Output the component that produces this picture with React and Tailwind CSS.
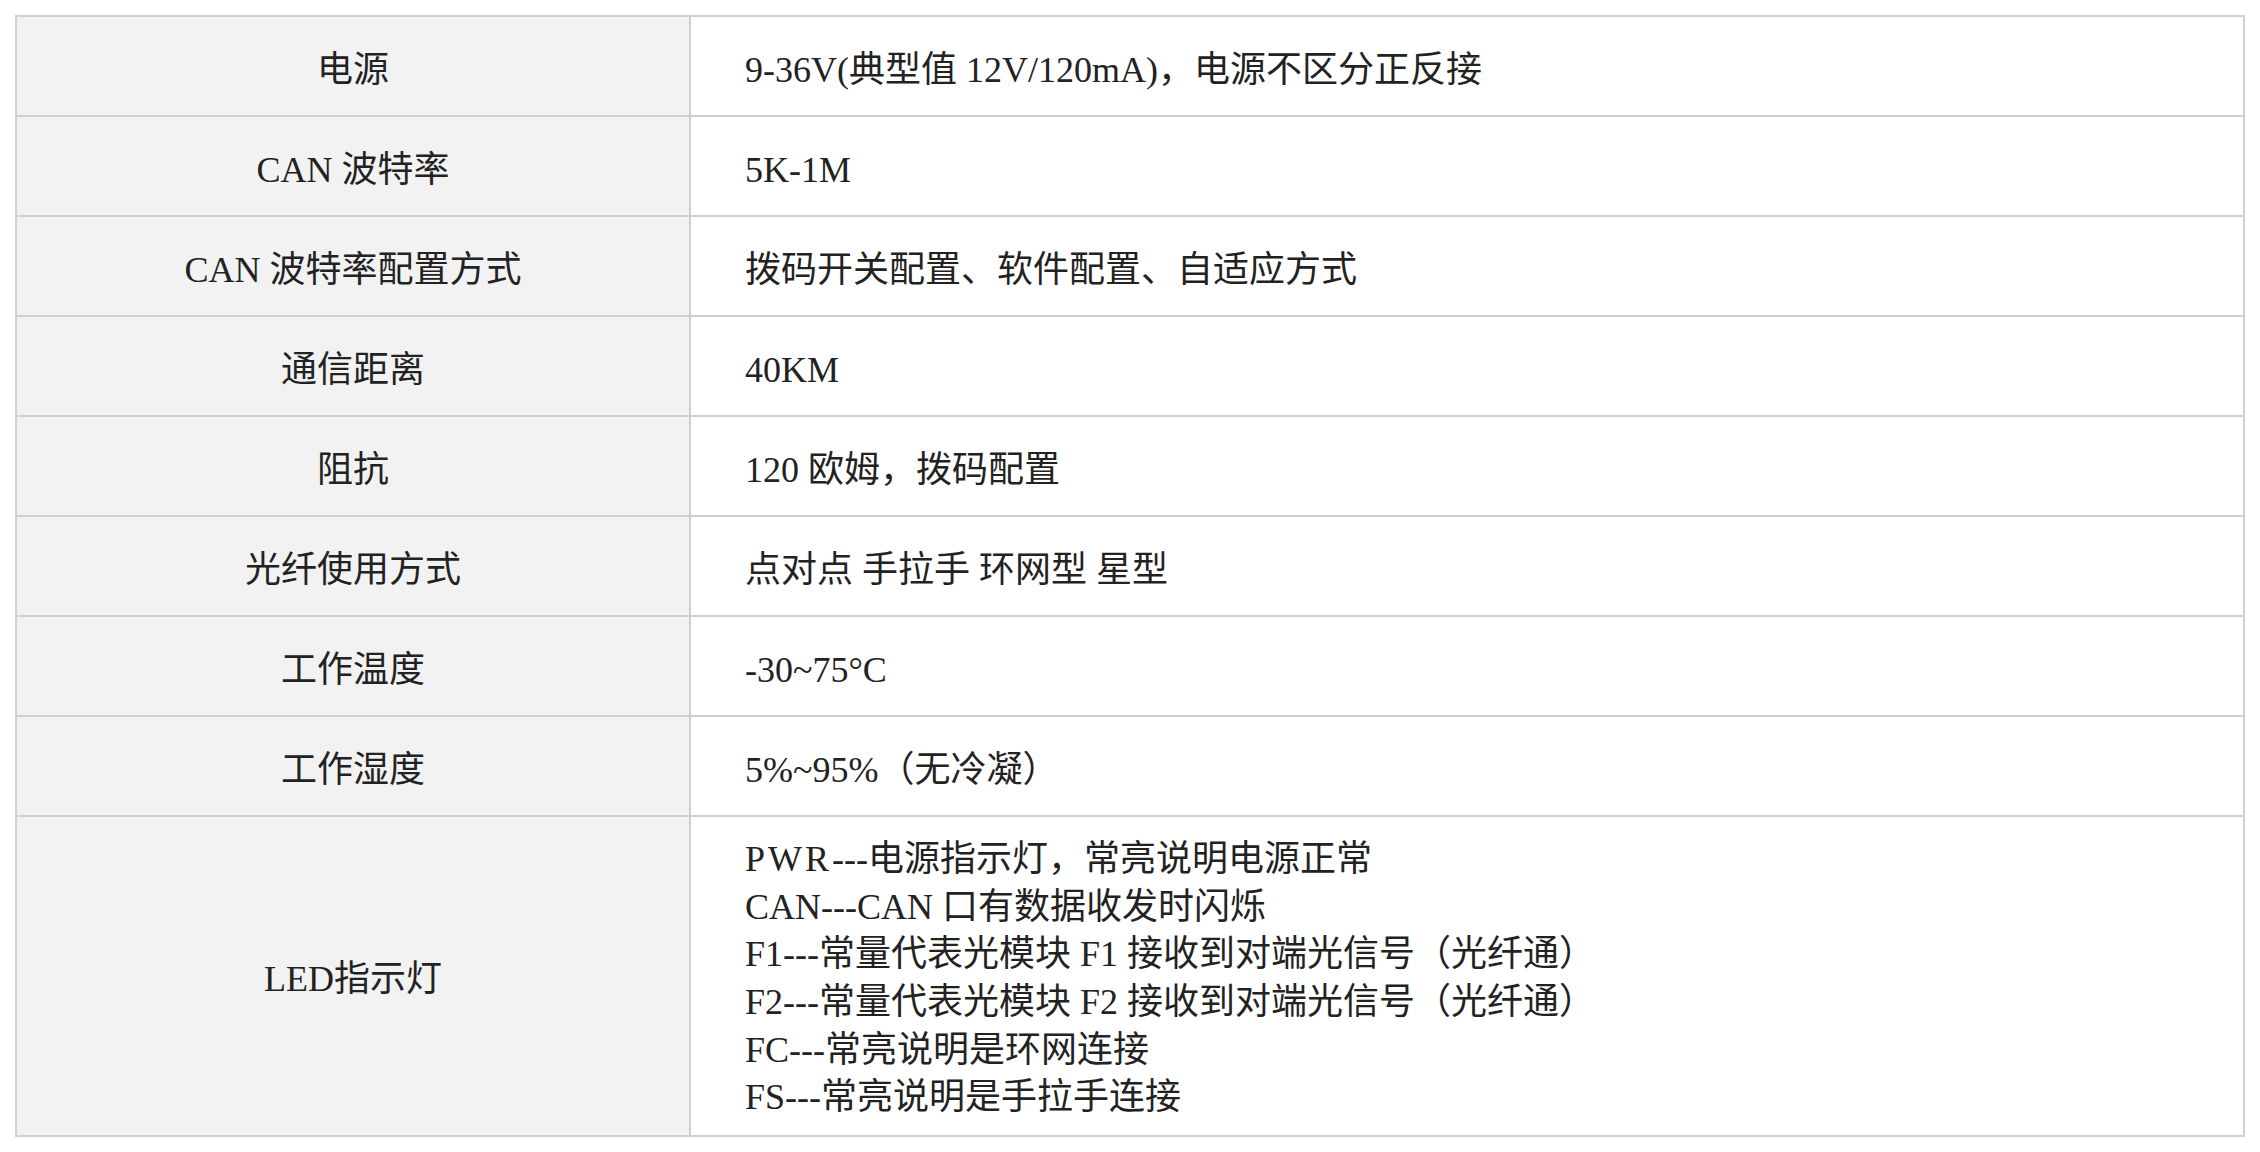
import React from "react";

const rows = [
  { label: "电源", value: "9-36V(典型值 12V/120mA)，电源不区分正反接" },
  { label: "CAN 波特率", value: "5K-1M" },
  { label: "CAN 波特率配置方式", value: "拨码开关配置、软件配置、自适应方式" },
  { label: "通信距离", value: "40KM" },
  { label: "阻抗", value: "120 欧姆，拨码配置" },
  { label: "光纤使用方式", value: "点对点 手拉手 环网型 星型" },
  { label: "工作温度", value: "-30~75°C" },
  { label: "工作湿度", value: "5%~95%（无冷凝）" },
];

const led = [
  "PWR---电源指示灯，常亮说明电源正常",
  "CAN---CAN 口有数据收发时闪烁",
  "F1---常量代表光模块 F1 接收到对端光信号（光纤通）",
  "F2---常量代表光模块 F2 接收到对端光信号（光纤通）",
  "FC---常亮说明是环网连接",
  "FS---常亮说明是手拉手连接",
];

export default function App() {
  return (
    <div
      className="w-[2260px] h-[1152px] bg-white p-[15px] text-[#222222] text-[36px]"
      style={{ fontFamily: '"Liberation Serif", "Noto Sans CJK SC", serif' }}
    >
      <div className="grid grid-cols-[674px_1554px] border-l-2 border-t-2 border-[#d0d0d0] w-[2230px]">
        {rows.map((r) => (
          <React.Fragment key={r.label}>
            <div className="h-[100px] bg-[#f2f2f2] border-r-2 border-b-2 border-[#d0d0d0] flex items-center justify-center pt-[8px]">
              <span className="leading-none">{r.label}</span>
            </div>
            <div className="h-[100px] bg-white border-r-2 border-b-2 border-[#d0d0d0] flex items-center pl-[54px] pt-[8px]">
              <span className="leading-none">{r.value}</span>
            </div>
          </React.Fragment>
        ))}
        <div className="h-[320px] bg-[#f2f2f2] border-r-2 border-b-2 border-[#d0d0d0] flex items-center justify-center pt-[6px]">
          <span className="leading-none">LED指示灯</span>
        </div>
        <div className="h-[320px] bg-white border-r-2 border-b-2 border-[#d0d0d0] flex flex-col justify-center pl-[54px] pt-[6px]">
          {led.map((l, i) => (
            <div key={i} className="leading-[47.6px] whitespace-nowrap">
              {i === 0 ? (
                <>
                  <span className="tracking-[3px]">PWR</span>
                  {l.slice(3)}
                </>
              ) : (
                l
              )}
            </div>
          ))}
        </div>
      </div>
    </div>
  );
}
